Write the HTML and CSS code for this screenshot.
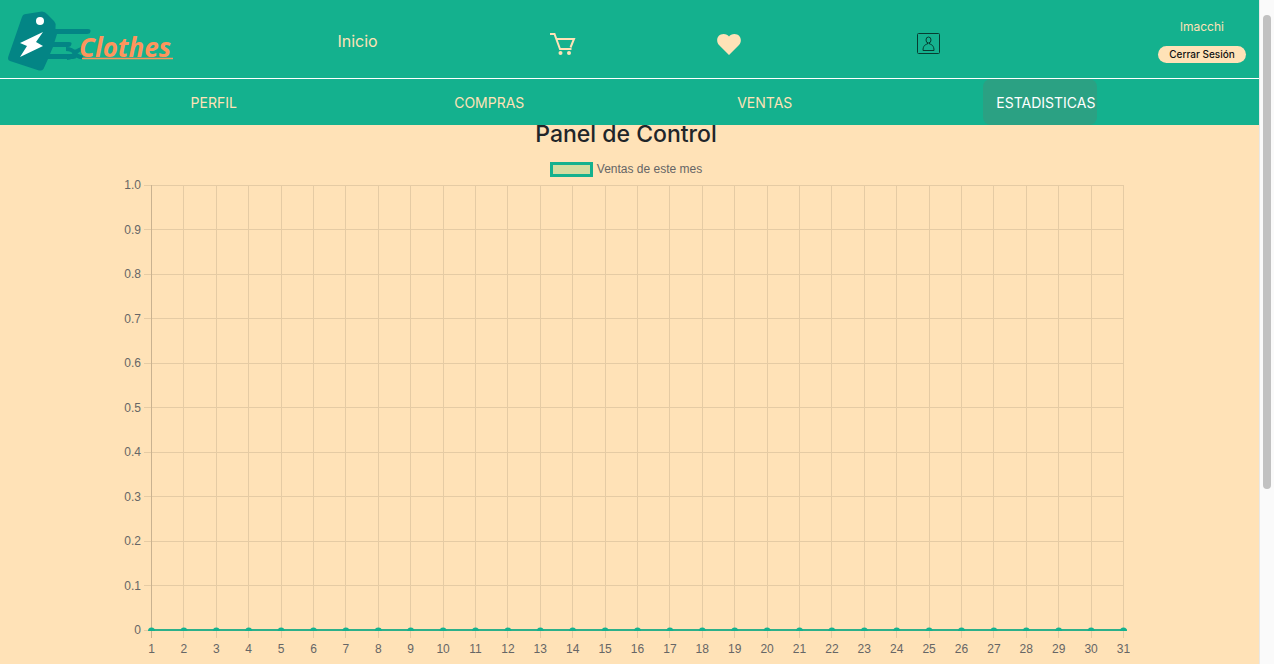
FILE: index.html
```html
<!DOCTYPE html>
<html lang="es">
<head>
<meta charset="utf-8">
<meta name="viewport" content="width=device-width, initial-scale=1">
<title>ExClothes - Panel de Control</title>
<link rel="stylesheet" href="styles.css">
</head>
<body>
<div class="app">
  <div class="page">
    <header class="topbar">
      <a class="brand" href="#" aria-label="ExClothes">
        <svg class="brand-logo" viewBox="0 0 176 78">
          <path d="M22 17Q23 14 26 14L42 11.500Q45 11.500 47 14L54 21Q56 23 55.500 27V29H88Q91 29 90.500 31.500Q90 34 87 34H57L54.500 42H69Q72 42 71.500 44Q71 47 68 47H53L50 54H74Q79 54 77 57Q76 59 73 59H48L43.500 69Q42 71 39 70.500L10 61Q7 60 8.500 56Z" fill="#038585"/>
          <path d="M66 49Q72 49 75 53Q79 49 83 49M67 58Q72 58 75 53Q78 58 83 57" fill="none" stroke="#038585" stroke-width="4"/>
          <circle cx="40" cy="21" r="4" fill="#fff"/>
          <path d="M43 32L20 43L27 46L20 57L43 46L36 42Z" fill="#fff"/>
          <text class="brand-text" x="79" y="57">Clothes</text>
          <path d="M82 58.500H173" stroke="#ff955c" stroke-width="1.500"/>
        </svg>
      </a>
      <a class="top-link" href="#">Inicio</a>
      <a class="top-link" href="#" aria-label="Carrito">
        <svg class="icon" viewBox="0 0 26 24" fill="none" stroke="#ffe2b7" stroke-width="2">
          <path d="M0 2H4.500L10 17H21.500M6 7H24L20.500 15.500"/>
          <circle cx="10.500" cy="21" r="2" fill="#ffe2b7" stroke="none"/>
          <circle cx="19" cy="21" r="2" fill="#ffe2b7" stroke="none"/>
        </svg>
      </a>
      <a class="top-link" href="#" aria-label="Favoritos">
        <svg class="icon" viewBox="0 0 26 24">
          <path d="M13 23L3 13C-1 8 2 2 7.500 2C10 2 12 3 13 4.500C14 3 16 2 18.500 2C24 2 27 8 23 13Z" fill="#ffe2b7"/>
        </svg>
      </a>
      <a class="top-link" href="#" aria-label="Cuenta">
        <svg class="icon" viewBox="0 0 26 24" fill="none" stroke="#073c31" stroke-width="1">
          <rect x="1.500" y="1.500" width="22" height="20" rx="1"/>
          <ellipse cx="12.500" cy="8" rx="2.500" ry="3"/>
          <path d="M11.500 10.500V12C9 12.500 7 14 7 18.500H18C18 14 16 12.500 13.500 12V10.500"/>
        </svg>
      </a>
      <div class="account">
        <span class="username">lmacchi</span>
        <button class="logout" type="button">Cerrar Sesión</button>
      </div>
    </header>
    <nav class="subnav">
      <a class="tab" href="#">PERFIL</a>
      <a class="tab" href="#">COMPRAS</a>
      <a class="tab" href="#">VENTAS</a>
      <a class="tab tab-active" href="#" aria-current="page">ESTADISTICAS</a>
    </nav>
    <main class="panel">
      <h1 class="title">Panel de Control</h1>
      <div class="legend"><span class="swatch"></span>Ventas de este mes</div>
      <svg class="chart" id="chart" viewBox="0 0 1008 480" role="img" aria-label="Ventas de este mes"></svg>
    </main>
  </div>
  <div class="scrollbar"><div class="thumb"></div></div>
</div>
<script src="chart.js"></script>
</body>
</html>
```
FILE: styles.css
```css
* { box-sizing: border-box; }
body {
  margin: 0;
  font-family: Inter, "Liberation Sans", sans-serif;
  background: #ffe2b7;
}
a { color: inherit; text-decoration: none; }
.app { display: flex; height: 100vh; overflow: hidden; }
.page { flex: 1; min-width: 0; overflow: hidden; }
.topbar {
  display: grid;
  grid-template-columns: 255fr 205fr 205fr 127fr 274fr 193fr;
  align-items: center;
  height: 79px;
  background: #14b18e;
  color: #ffe2b7;
  border-bottom: 1px solid #fff;
}
.brand-logo { display: block; width: 176px; height: 78px; }
.brand-text {
  font: italic bold 26px "Open Sans", sans-serif;
  fill: #ff955c;
}
.top-link {
  display: flex;
  justify-content: center;
  padding-top: 4px;
  font-size: 16px;
}
.icon { width: 26px; height: 24px; margin-top: 6px; }
.account {
  display: flex;
  flex-direction: column;
  align-items: center;
  justify-self: end;
  gap: 10px;
  padding: 2px 13px 0 0;
  font-size: 12px;
  line-height: 18px;
}
.logout {
  width: 88px;
  height: 17px;
  padding: 0;
  border: 0;
  border-radius: 9px;
  background: #ffe2b7;
  color: #111;
  font: 500 10px/17px Inter, sans-serif;
}
.subnav {
  position: relative;
  z-index: 1;
  display: grid;
  grid-template-columns: repeat(4, 1fr);
  justify-items: center;
  height: 46px;
  padding: 0 81px 0 76px;
  background: #14b18e;
  color: #ffe2b7;
  font-size: 14px;
  line-height: 44px;
}
.tab { padding-top: 2px; }
.tab-active {
  width: 114px;
  padding-left: 13px;
  border-radius: 8px;
  background: #2ba183;
  color: #fff;
}
.panel { padding: 0 129px 0 122px; }
.title {
  margin: -5px 0 0;
  font-size: 23px;
  font-weight: 500;
  line-height: 28px;
  text-align: center;
  color: #212529;
}
.legend {
  display: flex;
  align-items: center;
  justify-content: center;
  gap: 4px;
  margin-top: 13px;
  font: 12px/16px "Liberation Sans", Arial, sans-serif;
  color: #666;
}
.swatch {
  width: 43px;
  height: 15px;
  border: 3px solid #14b18e;
  background: #d4dba1;
}
.chart {
  display: block;
  width: 100%;
  height: auto;
  font: 12px "Liberation Sans", Arial, sans-serif;
}
.grid { stroke: #e5cba4; stroke-width: 1; shape-rendering: crispEdges; }
.axis { stroke: #c9b290; }
.label { fill: #666; }
.label-x { text-anchor: middle; }
.label-y { text-anchor: end; }
.series { stroke: #2db08a; stroke-width: 2; }
.point { fill: #14b18e; }
.scrollbar {
  width: 15px;
  padding: 15px 3px 0;
  border-left: 1px solid #e8e8e8;
  background: #fafafa;
}
.thumb { height: 73%; border-radius: 4px; background: #c1c1c1; }
```
FILE: chart.js
```javascript
const chart = document.getElementById("chart");
const area = { left: 29.5, right: 1001.5, top: 8, bottom: 453 };
const days = 31;

function add(name, attrs, text) {
  const el = document.createElementNS("http://www.w3.org/2000/svg", name);
  for (const key in attrs) el.setAttribute(key, attrs[key]);
  if (text !== undefined) el.textContent = text;
  chart.appendChild(el);
}

for (let i = 0; i <= 10; i++) {
  const y = area.bottom - (area.bottom - area.top) * i / 10;
  add("line", { class: "grid", x1: area.left - 8, x2: area.right, y1: y, y2: y });
  add("text", { class: "label label-y", x: 19, y: y + 4 }, i === 0 ? "0" : (i / 10).toFixed(1));
}
const xAt = d => area.left + (area.right - area.left) * (d - 1) / (days - 1);
for (let d = 1; d <= days; d++) {
  const x = xAt(d);
  add("line", { class: d === 1 ? "grid axis" : "grid", x1: x, x2: x, y1: area.top, y2: area.bottom + 8 });
  add("text", { class: "label label-x", x: x, y: area.bottom + 23 }, d);
}
add("line", { class: "series", x1: area.left - 2, x2: area.right + 3, y1: area.bottom, y2: area.bottom });
for (let d = 1; d <= days; d++) {
  const x = xAt(d);
  add("path", { class: "point", d: `M${x - 3.5} ${area.bottom + 1}A3.5 3.5 0 0 1 ${x + 3.5} ${area.bottom + 1}Z` });
}
```
